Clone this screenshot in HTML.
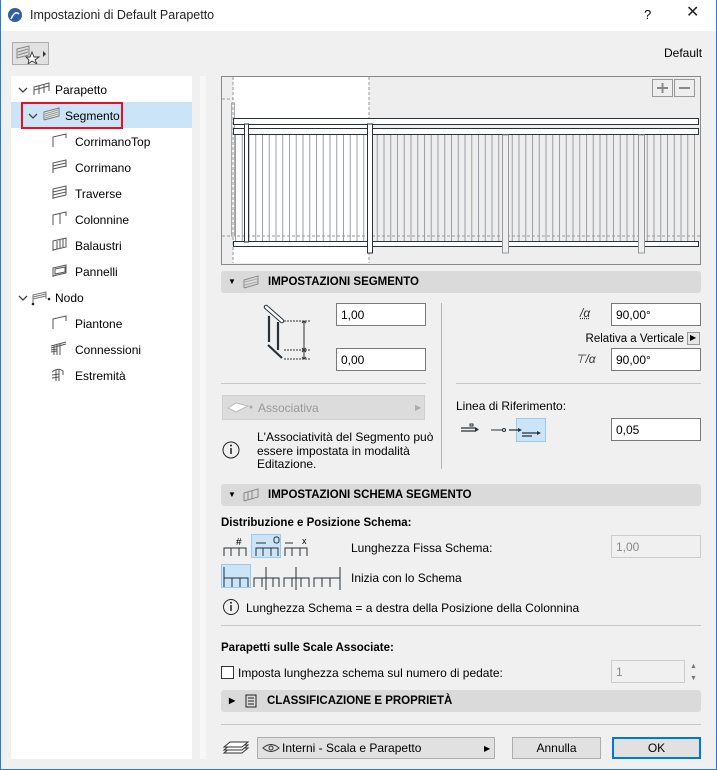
<!DOCTYPE html>
<html><head><meta charset="utf-8"><style>
*{box-sizing:border-box;margin:0;padding:0}
body{width:717px;height:770px;overflow:hidden;background:#f0f0f0;font-family:"Liberation Sans",sans-serif;font-size:12px;color:#000;position:relative}
.a{position:absolute}
.t{position:absolute;white-space:nowrap;line-height:14px}
.inp{position:absolute;background:#fff;border:1px solid #7a7a7a;height:23px;padding:4px 4px;line-height:14px}
.dis{background:#f0f0f0;border-color:#ccc;color:#888}
.hdr{position:absolute;left:221px;width:480px;height:22px;background:#dadada;border-radius:3px;font-weight:bold;font-size:11.5px;line-height:22px}
.hl{position:absolute;height:1px;background:#c6c6c6}
.btn{position:absolute;background:#e1e1e1;border:1px solid #adadad;text-align:center;line-height:20px}
.tree .t{left:75px}
</style></head><body>
<div class="a" style="left:0;top:0;width:717px;height:31px;background:#fff"></div>
<div class="a" style="left:716px;top:0;width:1px;height:770px;background:#2b7bd3"></div>
<div class="a" style="left:0;top:769px;width:717px;height:1px;background:#2b7bd3"></div>
<div class="a" style="left:0;top:0;width:1px;height:770px;background:#2b7bd3"></div>
<svg class="a" style="left:8px;top:8px" width="14" height="14"><circle cx="7" cy="7" r="7" fill="#2e5fa8"/><path d="M3 11 Q7 2 11 6" stroke="#fff" stroke-width="1.6" fill="none"/></svg>
<div class="t" style="left:30px;top:8px;font-size:12.5px;color:#222">Impostazioni di Default Parapetto</div>
<div class="t" style="left:644px;top:8px;font-size:13px">?</div>
<div class="t" style="left:686px;top:6px;font-size:16px;color:#222">✕</div>
<div class="a" style="left:12px;top:42px;width:37px;height:23px;background:#e1e1e1;border:1px solid #adadad"></div>
<svg class="a" style="left:14px;top:44px" width="34" height="20"><path d="M3 5 L15 2 L15 11 L3 14 Z" fill="#ddd" stroke="#888"/><path d="M4 8 L14 5 M4 11 L14 8" stroke="#888"/><path d="M18 8 L20 13 L25 13 L21 16 L23 20 L18 17 L14 20 L15 16 L12 13 L16 13 Z" fill="#fff" stroke="#333" stroke-width=".9"/><path d="M29 7 L32 10 L29 13 Z" fill="#333"/></svg>
<div class="t" style="left:664px;top:46px">Default</div>
<div class="a" style="left:11px;top:76px;width:181px;height:683px;background:#fff"></div>
<div class="a" style="left:11px;top:102px;width:181px;height:26px;background:#cce4f7"></div>
<div class="a" style="left:21px;top:102px;width:102px;height:27px;border:2px solid #e81123"></div>
<div class="tree">
<svg class="a" style="left:18px;top:86px" width="10" height="8"><path d="M1 2 L5 6 L9 2" stroke="#444" stroke-width="1.3" fill="none"/></svg>
<svg class="a" style="left:33px;top:82px" width="18" height="14"><path d="M1 13 V5 L16 1 V9 M6 12 V4 M11 11 V3 M1 8 L16 4" stroke="#555" fill="none"/></svg>
<div class="t" style="left:55px;top:83px">Parapetto</div>
<svg class="a" style="left:28px;top:112px" width="10" height="8"><path d="M1 2 L5 6 L9 2" stroke="#444" stroke-width="1.3" fill="none"/></svg>
<svg class="a" style="left:43px;top:107px" width="18" height="14"><path d="M1 13 V5 L16 1 V9 L1 13" stroke="#777" fill="#eee"/><path d="M2 7 L15 3 M2 9 L15 5 M2 11 L15 7" stroke="#999"/></svg>
<div class="t" style="left:65px;top:109px">Segmento</div>
<svg class="a" style="left:52px;top:133px" width="16" height="15"><path d="M1 14 V4 L14 1 V5" stroke="#555" fill="none"/></svg>
<div class="t" style="top:135px">CorrimanoTop</div>
<svg class="a" style="left:52px;top:159px" width="16" height="15"><path d="M1 14 V4 L14 1 V8 M1 7 L14 4 M1 10 L14 7" stroke="#555" fill="none"/></svg>
<div class="t" style="top:161px">Corrimano</div>
<svg class="a" style="left:52px;top:185px" width="16" height="15"><path d="M1 14 V4 L14 1 V10 M1 7 L14 4 M1 10 L14 7 M1 13 L14 10" stroke="#555" fill="none"/></svg>
<div class="t" style="top:187px">Traverse</div>
<svg class="a" style="left:52px;top:211px" width="16" height="15"><path d="M1 14 V4 L14 1 V5 M8 13 V3" stroke="#555" fill="none"/></svg>
<div class="t" style="top:213px">Colonnine</div>
<svg class="a" style="left:52px;top:237px" width="16" height="15"><path d="M1 14 V4 L14 1 V10 L1 13 M5 12 V4 M8 11 V3 M11 10 V2" stroke="#555" fill="none"/></svg>
<div class="t" style="top:239px">Balaustri</div>
<svg class="a" style="left:52px;top:263px" width="16" height="15"><path d="M1 14 V5 L14 2 V10 L1 13 M3 6 L13 4 V9 L3 11 Z" stroke="#555" fill="none"/></svg>
<div class="t" style="top:265px">Pannelli</div>
<svg class="a" style="left:18px;top:294px" width="10" height="8"><path d="M1 2 L5 6 L9 2" stroke="#444" stroke-width="1.3" fill="none"/></svg>
<svg class="a" style="left:31px;top:290px" width="20" height="16"><path d="M2 14 V5 L15 2 V9 M2 7 L15 4 M2 9 L15 6" stroke="#777" fill="none"/><circle cx="2" cy="14" r="1.3" fill="#222"/><circle cx="18" cy="9" r="1.3" fill="#222"/></svg>
<div class="t" style="left:55px;top:291px">Nodo</div>
<svg class="a" style="left:52px;top:315px" width="16" height="15"><path d="M1 14 V4 L14 1 V6" stroke="#555" fill="none"/></svg>
<div class="t" style="top:317px">Piantone</div>
<svg class="a" style="left:50px;top:341px" width="18" height="15"><path d="M1 5 L16 1 M1 7 L16 3 M4 14 V4 M7 14 V4 M10 14 V3 M1 9 L7 8 M1 11 L7 10" stroke="#555" fill="none"/></svg>
<div class="t" style="top:343px">Connessioni</div>
<svg class="a" style="left:50px;top:367px" width="18" height="15"><path d="M2 5 Q8 0 13 4 V8 M6 14 V3 M9 14 V3 M2 8 L9 7 M2 11 L9 10" stroke="#555" fill="none"/></svg>
<div class="t" style="top:369px">Estremità</div>
</div>
<div class="a" style="left:200px;top:76px;width:6px;height:683px;background:#f7f7f7"></div>
<svg class="a" style="left:221px;top:76px" width="480" height="189">
<rect x="0.5" y="0.5" width="479" height="188" fill="#eee" stroke="#888"/>
<rect x="12" y="1" width="136" height="186" fill="#fff"/>
<defs><pattern id="b" x="14" y="0" width="6.75" height="10" patternUnits="userSpaceOnUse"><rect x="0" y="0" width="1" height="10" fill="#9aa0a4"/></pattern></defs>
<rect x="14" y="57" width="464" height="109" fill="url(#b)"/>
<path d="M1 23 H12 M12 1 V187 M148 1 V187 M1 160 H479" stroke="#999" stroke-dasharray="3,2"/>
<rect x="10.5" y="27" width="3" height="133" fill="none" stroke="#aaa"/>
<rect x="12.5" y="42.5" width="465" height="6" fill="#fff" stroke="#263238"/>
<rect x="12.5" y="52.5" width="465" height="6" fill="#fff" stroke="#263238"/>
<rect x="12.5" y="165.5" width="465" height="5" fill="#fff" stroke="#263238"/>
<rect x="23.5" y="48" width="4" height="118" fill="#fff" stroke="#263238"/>
<rect x="146.5" y="48" width="5" height="129" fill="#fff" stroke="#263238"/>
<rect x="281.5" y="59" width="6" height="118" fill="#eee" stroke="#999"/>
<rect x="417.5" y="59" width="6" height="118" fill="#eee" stroke="#999"/>
<rect x="431.5" y="3.5" width="20" height="17" fill="#eee" stroke="#999"/>
<rect x="453.5" y="3.5" width="20" height="17" fill="#eee" stroke="#999"/>
<path d="M441.5 7 V17 M436 12 H447 M458 12 H469" stroke="#888" stroke-width="2"/>
</svg>
<div class="hdr" style="top:271px"><span class="a" style="left:7px;top:0;font-size:8px">▼</span><svg class="a" style="left:22px;top:4px" width="16" height="14"><path d="M1 13 V5 L15 1 V9 L1 13" stroke="#888" fill="none"/><path d="M2 7 L14 4 M2 10 L14 7" stroke="#aaa"/></svg><span class="a" style="left:47px">IMPOSTAZIONI SEGMENTO</span></div>
<svg class="a" style="left:262px;top:302px" width="60" height="64">
<path d="M4 5 L20 19" stroke="#263238" stroke-width="4.5" stroke-linecap="round"/><path d="M4 5 L20 19" stroke="#fff" stroke-width="2.5" stroke-linecap="round"/>
<path d="M7 14 V40 M16 20 V48 M6 43 L20 56" stroke="#263238" stroke-width="2.2"/>
<path d="M22 19 H49 M22 48 H49 M22 57 H49" stroke="#333" stroke-dasharray="2,1"/>
<path d="M42 19 V57 M40 21 L42 19 L44 21 M40 46 L42 48 L44 46 M40 50 L42 48 L44 50 M40 55 L42 57 L44 55" stroke="#333" fill="none"/>
</svg>
<div class="inp" style="left:336px;top:303px;width:90px">1,00</div>
<div class="inp" style="left:336px;top:348px;width:90px">0,00</div>
<div class="a" style="left:441px;top:303px;width:1px;height:166px;background:#b5b5b5"></div>
<div class="t" style="left:580px;top:306px;font-style:italic;color:#333;text-decoration:underline dotted">/α</div>
<div class="inp" style="left:611px;top:303px;width:90px">90,00°</div>
<div class="t" style="right:33px;top:332px;font-size:11.5px">Relativa a Verticale</div>
<div class="a" style="left:687px;top:332px;width:13px;height:13px;border:1px solid #999;background:#e6e6e6"></div><div class="t" style="left:690px;top:331px;font-size:8px">▶</div>
<div class="t" style="left:575px;top:352px;color:#333;font-style:italic">⊤/α</div>
<div class="inp" style="left:611px;top:348px;width:90px">90,00°</div>
<div class="hl" style="left:221px;top:383px;width:205px"></div>
<div class="hl" style="left:456px;top:383px;width:245px"></div>
<div class="a" style="left:222px;top:395px;width:203px;height:25px;background:#dcdcdc;border:1px solid #cfcfcf"></div>
<svg class="a" style="left:226px;top:400px" width="30" height="14"><path d="M2 8 L10 3 L22 6 L10 12 Z" fill="#fff" stroke="#bbb"/><circle cx="25" cy="7" r="1.5" fill="#aaa"/></svg>
<div class="t" style="left:258px;top:401px;color:#999">Associativa</div>
<div class="t" style="left:415px;top:401px;color:#aaa;font-size:8px">▶</div>
<svg class="a" style="left:221px;top:440px" width="20" height="20"><circle cx="10" cy="10" r="8" fill="none" stroke="#222"/><path d="M10 8 V14" stroke="#222" stroke-width="1.5"/><circle cx="10" cy="5.5" r="1" fill="#222"/></svg>
<div class="t" style="left:257px;top:431px;line-height:13.5px">L'Associatività del Segmento può<br>essere impostata in modalità<br>Editazione.</div>
<div class="t" style="left:456px;top:399px">Linea di Riferimento:</div>
<div class="a" style="left:516px;top:418px;width:30px;height:24px;background:#cce4f7;border:1px solid #99c9ef"></div>
<svg class="a" style="left:460px;top:420px" width="90" height="20"><path d="M1 8 H15 M1 11 H15 M49 10 H58 M62 13 H77 M62 16 H72" stroke="#263238" stroke-width="1.3"/><path d="M15 7 L19 9.5 L15 12 Z M58 8 L62 10 L58 12 Z M77 11 L81 13 L77 15 Z" fill="#263238"/><path d="M31 10 H42" stroke="#263238"/><circle cx="44" cy="10" r="1.5" fill="none" stroke="#263238"/><rect x="10" y="4" width="3" height="2" fill="none" stroke="#263238"/></svg>
<div class="inp" style="left:611px;top:418px;width:90px">0,05</div>
<div class="hdr" style="top:484px"><span class="a" style="left:7px;top:0;font-size:8px">▼</span><svg class="a" style="left:22px;top:4px" width="16" height="14"><path d="M1 13 V5 L15 1 V9 L1 13 M5 12 V4 M9 11 V3" stroke="#888" fill="none"/></svg><span class="a" style="left:47px">IMPOSTAZIONI SCHEMA SEGMENTO</span></div>
<div class="t" style="left:221px;top:516px;font-weight:bold;font-size:11.5px">Distribuzione e Posizione Schema:</div>
<div class="a" style="left:251px;top:534px;width:30px;height:24px;background:#cce4f7;border:1px solid #99c9ef"></div>
<div class="a" style="left:221px;top:564px;width:30px;height:24px;background:#cce4f7;border:1px solid #99c9ef"></div>
<svg class="a" style="left:221px;top:534px" width="130" height="56">
<g stroke="#263238" fill="none"><path d="M3 22 V14 H25 V22 M10 22 V14 M18 22 V14"/><path d="M35 22 V14 H57 V22 M42 22 V14 M50 22 V14 M35 9 H45"/><path d="M64 22 V14 H86 V22 M71 22 V14 M79 22 V14 M64 9 H72"/>
<path d="M3 53 V44 H27 V53 M11 53 V44 M19 53 V44 M3 44 V33"/><path d="M33 53 V44 H58 V53 M41 53 V44 M52 53 V44 M45 56 V33"/><path d="M63 53 V44 H88 V53 M71 53 V44 M80 53 V44 M75 56 V33"/><path d="M93 53 V44 H119 V53 M101 53 V44 M109 53 V44 M119 56 V33"/></g>
<text x="15" y="11" font-size="10" font-family="Liberation Sans">#</text><text x="81" y="10" font-size="9" font-family="Liberation Sans">x</text>
<rect x="53" y="3" width="5" height="6" rx="2" fill="none" stroke="#263238"/>
</svg>
<div class="t" style="left:351px;top:541px">Lunghezza Fissa Schema:</div>
<div class="inp dis" style="left:611px;top:535px;width:90px">1,00</div>
<div class="t" style="left:351px;top:571px">Inizia con lo Schema</div>
<svg class="a" style="left:222px;top:598px" width="18" height="18"><circle cx="9" cy="9" r="7.5" fill="none" stroke="#222"/><path d="M9 7 V13" stroke="#222" stroke-width="1.5"/><circle cx="9" cy="4.8" r="1" fill="#222"/></svg>
<div class="t" style="left:246px;top:601px">Lunghezza Schema = a destra della Posizione della Colonnina</div>
<div class="hl" style="left:221px;top:625px;width:480px"></div>
<div class="t" style="left:221px;top:641px;font-weight:bold;font-size:11.5px">Parapetti sulle Scale Associate:</div>
<div class="a" style="left:221px;top:666px;width:13px;height:13px;border:1px solid #333;background:#fff"></div>
<div class="t" style="left:238px;top:666px">Imposta lunghezza schema sul numero di pedate:</div>
<div class="inp dis" style="left:611px;top:660px;width:74px">1</div>
<div class="t" style="left:690px;top:660px;font-size:7px;color:#777">▲</div>
<div class="t" style="left:690px;top:672px;font-size:7px;color:#777">▼</div>
<div class="hdr" style="top:690px"><span class="a" style="left:8px;top:0;font-size:8px">▶</span><svg class="a" style="left:24px;top:4px" width="12" height="14"><rect x="1" y="1" width="10" height="12" fill="none" stroke="#222"/><path d="M3 4 H9 M3 7 H9 M3 10 H9" stroke="#222"/></svg><span class="a" style="left:46px">CLASSIFICAZIONE E PROPRIETÀ</span></div>
<div class="hl" style="left:221px;top:724px;width:480px"></div>
<svg class="a" style="left:222px;top:739px" width="28" height="18"><g stroke="#333" fill="#fff"><path d="M2 14 L8 9 H26 L20 14 Z"/><path d="M2 11 L8 6 H26 L20 11 Z"/><path d="M2 8 L8 3 H26 L20 8 Z"/></g></svg>
<div class="btn" style="left:257px;top:737px;width:238px;height:22px;text-align:left;padding-left:24px">Interni - Scala e Parapetto</div>
<svg class="a" style="left:262px;top:743px" width="18" height="10"><path d="M1 5 Q9 -2 17 5 Q9 12 1 5 Z" fill="none" stroke="#333"/><circle cx="9" cy="5" r="2" fill="none" stroke="#333"/></svg>
<div class="t" style="left:484px;top:742px;font-size:8px">▶</div>
<div class="btn" style="left:512px;top:737px;width:89px;height:22px">Annulla</div>
<div class="btn" style="left:612px;top:737px;width:89px;height:22px;border:2px solid #0078d7;line-height:18px">OK</div>
</body></html>
